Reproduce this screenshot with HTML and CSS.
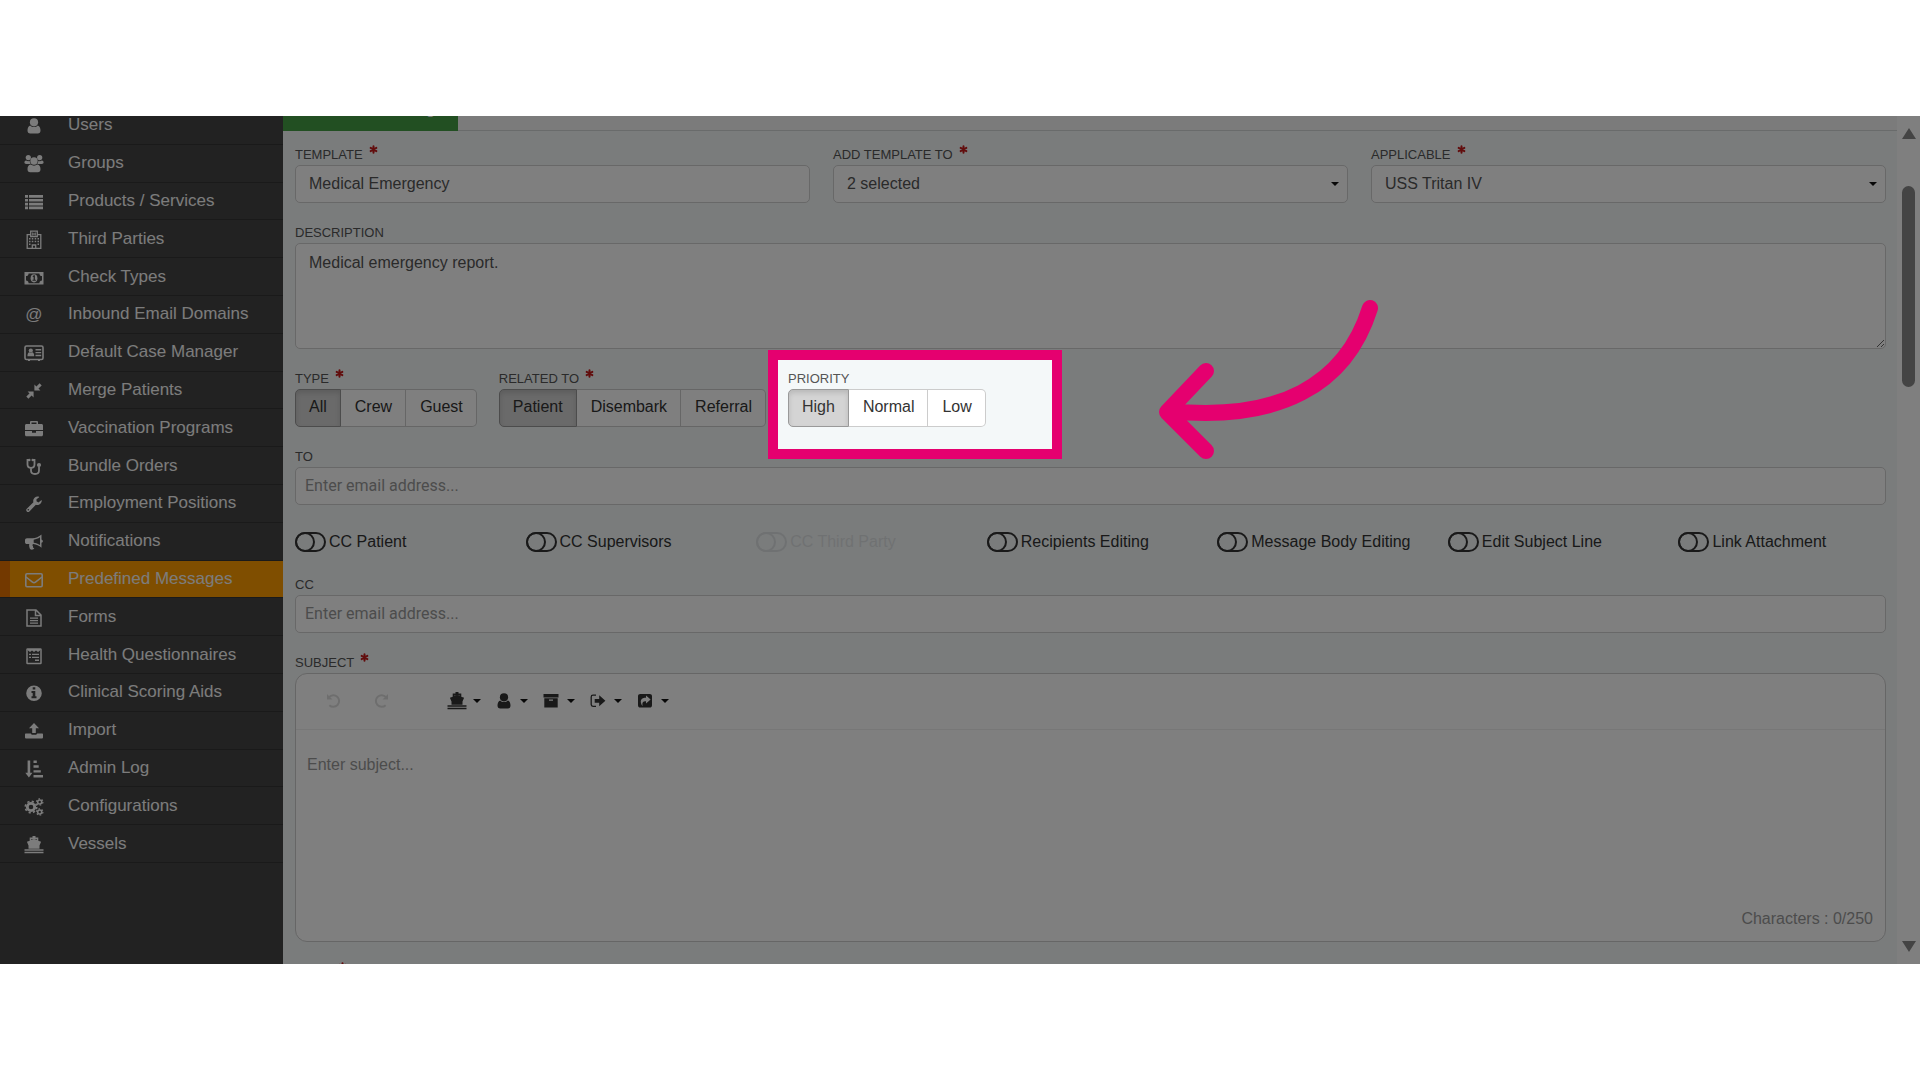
FILE: index.html
```html
<!DOCTYPE html>
<html lang="en">
<head>
<meta charset="utf-8">
<title>Predefined Messages</title>
<link rel="stylesheet" href="styles.css">
</head>
<body>
<svg class="sprite" aria-hidden="true">
  <symbol id="user" viewBox="0 0 20 20"><circle cx="10" cy="6.3" r="4.1"/><path d="M6.2 9.4c1 1 2.3 1.6 3.8 1.6s2.800-.6 3.800-1.600c2 .6 2.700 2.800 2.700 5.100 0 1.900-1 3-2.700 3H6.200c-1.700 0-2.700-1.100-2.700-3 0-2.300.7-4.500 2.700-5.100z"/></symbol>
  <symbol id="group" viewBox="0 0 20 20"><circle cx="4.300" cy="3.600" r="2.600"/><circle cx="15.700" cy="3.600" r="2.600"/><circle cx="10" cy="7" r="3.700"/><path d="M2.100 6.400c1.200.9 2.600.9 3.600.4 0 1.400.4 2.400 1 3.200H2.300C1 10 .4 9.300.4 8.300c0-.8.5-1.800 1.700-1.900zM17.900 6.400c-1.200.9-2.600.9-3.600.4 0 1.400-.4 2.400-1 3.200h4.400c1.300 0 1.900-.7 1.900-1.700 0-.8-.5-1.800-1.700-1.900zM6.700 10.600c1.900 1.500 4.700 1.500 6.600 0 2.500.3 3.200 2.500 3.200 4.700 0 1.800-1 2.900-2.700 2.900H6.200c-1.700 0-2.700-1.100-2.700-2.900 0-2.200.7-4.400 3.200-4.700z"/></symbol>
  <symbol id="list" viewBox="0 0 20 20"><path d="M1 3h3v2.700H1zM5 3h14v2.700H5zM1 6.900h3v2.700H1zM5 6.900h14v2.700H5zM1 10.700h3v2.700H1zM5 10.700h14v2.700H5zM1 14.500h3v2.700H1zM5 14.500h14v2.700H5z"/></symbol>
  <symbol id="hospital" viewBox="0 0 20 20"><path fill="none" stroke="currentColor" stroke-width="1.300" d="M6.500 4.700H3.200v13.600h13.600V4.700h-3.300M6.700 6.500V1.200h6.600v5.300zM8.300 18v-3h3.400v3"/><path d="M8.200 2.500h1v1h1.600v-1h1v3h-1v-1H9.200v1h-1zM5 8h1.500v1.500H5zM7.800 8h1.500v1.500H7.800zM10.700 8h1.500v1.500h-1.500zM13.500 8H15v1.500h-1.500zM5 10.700h1.500v1.500H5zM7.800 10.700h1.500v1.500H7.800zM10.700 10.700h1.500v1.500h-1.500zM13.500 10.700H15v1.500h-1.500zM5 13.400h1.500v1.500H5zM13.500 13.400H15v1.500h-1.500z"/></symbol>
  <symbol id="money" viewBox="0 0 20 20"><path fill-rule="evenodd" d="M.5 4h19v12.600H.5zM4.600 5.400C4.600 7 3.500 8 2 8v4.600c1.500 0 2.600 1 2.600 2.600h10.800c0-1.600 1.100-2.600 2.600-2.600V8c-1.500 0-2.600-1-2.600-2.600z"/><ellipse cx="10" cy="10.300" rx="3.400" ry="4.100"/><path class="cut" d="M8.600 8.300l1.200-1h1.100v4.500h1v1H8.500v-1h1.100V8.700l-.6.4z"/></symbol>
  <symbol id="contact" viewBox="0 0 20 20"><rect x="1" y="3" width="18" height="13.500" rx="1.500" fill="none" stroke="currentColor" stroke-width="1.600"/><circle cx="6.800" cy="7.500" r="2.100"/><path d="M3.400 13.300c0-2.700 1-4 2-4 .9.600 1.900.6 2.800 0 1 0 2 1.300 2 4zM11.500 6h5.700v1.400h-5.700zM11.500 8.900h5.700v1.400h-5.700zM11.500 11.800h5.700v1.400h-5.700zM4 16h2v2H4zM14 16h2v2h-2z"/></symbol>
  <symbol id="compress" viewBox="0 0 20 20"><path d="M9.600 10.400v6l-2-1.900-3.200 3.200-2.100-2.100 3.200-3.200-1.900-2zM10.400 9.600v-6l2 1.900 3.200-3.200 2.100 2.100-3.200 3.200 1.900 2z"/></symbol>
  <symbol id="briefcase" viewBox="0 0 20 20"><path fill-rule="evenodd" d="M6 5V3.200C6 2.500 6.500 2 7.200 2h5.600c.7 0 1.200.5 1.200 1.200V5h3.500c.9 0 1.500.6 1.500 1.500V11H1V6.500C1 5.600 1.600 5 2.500 5zm1.500 0h5V3.500h-5zM1 12h7v1.700h4V12h7v3.700c0 .9-.6 1.500-1.500 1.500h-15c-.9 0-1.500-.6-1.500-1.500z"/></symbol>
  <symbol id="stethoscope" viewBox="0 0 20 20"><path fill="none" stroke="currentColor" stroke-width="1.800" d="M5 3H3.500v4.500c0 2 1.400 3.300 3.500 3.300s3.500-1.300 3.500-3.300V3H9M7 10.800v2.700c0 2 1.500 3.500 4 3.500s4-1.500 4-3.500V9.500"/><circle cx="15" cy="8" r="2.100"/><circle cx="5.300" cy="3" r="1.200"/><circle cx="8.700" cy="3" r="1.200"/></symbol>
  <symbol id="wrench" viewBox="0 0 20 20"><path fill-rule="evenodd" d="M17.600 6c.4 1-.1 2.600-1.200 3.700-1.200 1.200-2.900 1.600-4.500 1.100l-6.500 6.600c-.8.8-1.900.8-2.600 0-.8-.7-.8-1.900 0-2.600l6.600-6.500c-.5-1.700 0-3.400 1.200-4.500 1.200-1.100 2.800-1.500 4.400-1l.2.500-2.700 2v2l1.900 1.100zM4.300 14.900a.8.800 0 100 1.600.8.800 0 000-1.600z"/></symbol>
  <symbol id="bullhorn" viewBox="0 0 20 20"><path fill-rule="evenodd" d="M17.500 2.500v5c1.900.4 1.900 2.900 0 3.300v5c-2.500-2-5-3.400-8.300-3.700-1 .6-.9 1.600-.1 2.200-.5.900.2 1.600 1.200 2.300-.9 1.400-3.300 1.300-4.300.5-.6-1.800-1.200-3.200-.7-5H3c-1.200 0-2-.8-2-1.900V8.100c0-1.100.8-1.900 2-1.900h5.500c3.300 0 6.300-1.600 9-3.700zM16 5.300c-2 1.300-4 2.100-6.300 2.400v3c2.300.3 4.300 1.100 6.300 2.400z"/></symbol>
  <symbol id="envelope" viewBox="0 0 20 20"><rect x="1.800" y="3.800" width="16.400" height="13" rx="1.200" fill="none" stroke="currentColor" stroke-width="1.600"/><path fill="none" stroke="currentColor" stroke-width="1.600" d="M2 7l6.500 5.200c1 .8 2 .8 3 0L18 7"/></symbol>
  <symbol id="file" viewBox="0 0 20 20"><path fill="none" stroke="currentColor" stroke-width="1.500" d="M3 2h9l5 5v11H3zM11.500 2v5.500H17"/><path d="M6 9.500h8v1.300H6zM6 12h8v1.300H6zM6 14.500h8v1.300H6z"/></symbol>
  <symbol id="form" viewBox="0 0 20 20"><rect x="3" y="3" width="14" height="14.500" rx=".6" fill="none" stroke="currentColor" stroke-width="1.500"/><path d="M4 4.500l2 1.500 2-1.500L10 6l2-1.500L14 6l2-1.500V3H4zM5 7.800h2V9H5zM8 7.800h7V9H8zM5 10.700h2v1.200H5zM8 10.700h7v1.200H8zM11 13.500h4V15h-4z"/></symbol>
  <symbol id="info" viewBox="0 0 20 20"><path fill-rule="evenodd" d="M10 2.400a7.800 7.800 0 100 15.600 7.800 7.800 0 000-15.600zM8.700 4.300h2.600v2.200H8.700zM7.500 8h3.800v5.300h1.200v1.900h-5v-1.900h1.200V9.900H7.500z"/></symbol>
  <symbol id="upload" viewBox="0 0 20 20"><path d="M10 2l5 5.200h-3.200V12H8.200V7.200H5zM1.700 12.500h5.100c.4 1 1 1.300 1.600 1.300h3.200c.6 0 1.200-.3 1.600-1.300h5.100c.4 0 .7.300.7.700v3.400c0 .5-.3.800-.7.800H1.700c-.4 0-.7-.3-.7-.8v-3.400c0-.4.3-.7.700-.7z"/></symbol>
  <symbol id="sort" viewBox="0 0 20 20"><path d="M3.600 1.500h2.600v12.300h2.300L4.900 18.600 1.300 13.800h2.300zM9.500 1.600h3.300v2.400H9.500zM9.500 6.300h5.200v2.400H9.500zM9.500 11.200h7.300v2.400H9.500zM9.500 16H19v2.400H9.500z"/></symbol>
  <symbol id="cogs" viewBox="0 0 20 20"><circle cx="7" cy="10" r="3.700" fill="none" stroke="currentColor" stroke-width="2.800"/><circle cx="7" cy="10" r="5.700" fill="none" stroke="currentColor" stroke-width="1.700" stroke-dasharray="2.200 2.280"/><circle cx="15.700" cy="5" r="2" fill="none" stroke="currentColor" stroke-width="1.600"/><circle cx="15.700" cy="5" r="3.200" fill="none" stroke="currentColor" stroke-width="1.200" stroke-dasharray="1.600 1.750"/><circle cx="15.700" cy="15" r="2" fill="none" stroke="currentColor" stroke-width="1.600"/><circle cx="15.700" cy="15" r="3.200" fill="none" stroke="currentColor" stroke-width="1.200" stroke-dasharray="1.600 1.750"/></symbol>
  <symbol id="ship" viewBox="0 0 20 20"><path d="M8.500 1h3v1.500h2.800v3.200l2.800 1-1.600 3.900v3.100h-11v-3.100L2.900 6.700l2.800-1V2.500h2.800zM.5 14.300h19v1.400H.5zM.5 16.700h19v1.600H.5z"/><path class="shade" d="M7 4h6v1.100l-3-1-3 1z"/></symbol>
  <symbol id="undo" viewBox="0 0 20 20"><path fill="none" stroke="currentColor" stroke-width="2" d="M5 6.200A5.800 5.800 0 1 1 5.300 14.200"/><path d="M3 3v5.500h5.500z"/></symbol>
  <symbol id="archive" viewBox="0 0 20 20"><path fill-rule="evenodd" d="M2.500 3h15v3.500h-15zM3.300 7.300h13.400v9.200H3.300zM8 8.500v1.200h4V8.500z"/></symbol>
  <symbol id="signout" viewBox="0 0 20 20"><path fill="none" stroke="currentColor" stroke-width="1.300" d="M8 4.200H5C4 4.200 3.200 5 3.200 6v7.600c0 1 .8 1.800 1.800 1.800h3"/><path d="M6.700 7.900h4.500V4.300l6.200 5.500-6.200 5.500v-3.600H6.700z"/></symbol>
  <symbol id="share" viewBox="0 0 20 20"><path fill-rule="evenodd" d="M5.300 3h9.400C16.100 3 17 3.900 17 5.300v8.900c0 1.400-.9 2.300-2.300 2.300H5.300C3.900 16.500 3 15.600 3 14.200V5.300C3 3.900 3.900 3 5.300 3zM11 4.600v2.200c-4.800 0-6.400 2.700-4.300 7.200l1 .9c-.9-3.300.3-4.700 3.300-4.700v2.200l4.600-3.900z"/></symbol>
  <symbol id="star" viewBox="0 0 10 10"><path fill="none" stroke="currentColor" stroke-width="2.200" stroke-linecap="round" d="M5 1.400v7.200M1.800 3.200l6.400 3.600M8.200 3.200L1.800 6.800"/></symbol>
</svg>

<div class="app">
  <nav class="sidebar" aria-label="Settings">
    <ul class="menu">
      <li><a href="#"><svg class="icon"><use href="#user"/></svg>Users</a></li>
      <li><a href="#"><svg class="icon"><use href="#group"/></svg>Groups</a></li>
      <li><a href="#"><svg class="icon"><use href="#list"/></svg>Products / Services</a></li>
      <li><a href="#"><svg class="icon"><use href="#hospital"/></svg>Third Parties</a></li>
      <li><a href="#"><svg class="icon"><use href="#money"/></svg>Check Types</a></li>
      <li><a href="#"><span class="icon at" aria-hidden="true">@</span>Inbound Email Domains</a></li>
      <li><a href="#"><svg class="icon"><use href="#contact"/></svg>Default Case Manager</a></li>
      <li><a href="#"><svg class="icon"><use href="#compress"/></svg>Merge Patients</a></li>
      <li><a href="#"><svg class="icon"><use href="#briefcase"/></svg>Vaccination Programs</a></li>
      <li><a href="#"><svg class="icon"><use href="#stethoscope"/></svg>Bundle Orders</a></li>
      <li><a href="#"><svg class="icon"><use href="#wrench"/></svg>Employment Positions</a></li>
      <li><a href="#"><svg class="icon"><use href="#bullhorn"/></svg>Notifications</a></li>
      <li><a href="#" class="active" aria-current="page"><svg class="icon"><use href="#envelope"/></svg>Predefined Messages</a></li>
      <li><a href="#"><svg class="icon"><use href="#file"/></svg>Forms</a></li>
      <li><a href="#"><svg class="icon"><use href="#form"/></svg>Health Questionnaires</a></li>
      <li><a href="#"><svg class="icon"><use href="#info"/></svg>Clinical Scoring Aids</a></li>
      <li><a href="#"><svg class="icon"><use href="#upload"/></svg>Import</a></li>
      <li><a href="#"><svg class="icon"><use href="#sort"/></svg>Admin Log</a></li>
      <li><a href="#"><svg class="icon"><use href="#cogs"/></svg>Configurations</a></li>
      <li><a href="#"><svg class="icon"><use href="#ship"/></svg>Vessels</a></li>
    </ul>
  </nav>

  <main class="main">
    <div class="tabs"><button type="button" class="tab">Predefined Message</button></div>
    <form class="form">
      <div class="columns">
        <div class="field">
          <label class="label" for="template">TEMPLATE <svg class="required"><use href="#star"/></svg></label>
          <input class="control" id="template" type="text" value="Medical Emergency">
        </div>
        <div class="field">
          <label class="label" for="addto">ADD TEMPLATE TO <svg class="required"><use href="#star"/></svg></label>
          <div class="select"><select class="control" id="addto"><option>2 selected</option></select></div>
        </div>
        <div class="field">
          <label class="label" for="applicable">APPLICABLE <svg class="required"><use href="#star"/></svg></label>
          <div class="select"><select class="control" id="applicable"><option>USS Tritan IV</option></select></div>
        </div>
      </div>

      <div class="field">
        <label class="label" for="description">DESCRIPTION</label>
        <textarea class="control description" id="description">Medical emergency report.</textarea>
      </div>

      <div class="choices">
        <div class="field" role="group" aria-labelledby="type">
          <span class="label" id="type">TYPE <svg class="required"><use href="#star"/></svg></span>
          <div class="segments">
            <button type="button" class="segment" aria-pressed="true">All</button>
            <button type="button" class="segment">Crew</button>
            <button type="button" class="segment">Guest</button>
          </div>
        </div>
        <div class="field" role="group" aria-labelledby="related">
          <span class="label" id="related">RELATED TO <svg class="required"><use href="#star"/></svg></span>
          <div class="segments">
            <button type="button" class="segment" aria-pressed="true">Patient</button>
            <button type="button" class="segment">Disembark</button>
            <button type="button" class="segment">Referral</button>
          </div>
        </div>
        <div class="field priority" role="group" aria-labelledby="priority">
          <span class="label" id="priority">PRIORITY</span>
          <div class="segments">
            <button type="button" class="segment" aria-pressed="true">High</button>
            <button type="button" class="segment">Normal</button>
            <button type="button" class="segment">Low</button>
          </div>
          <div class="spotlight"></div>
          <svg class="pointer" viewBox="0 0 224 164" aria-hidden="true"><path d="M213 9C189 86 122 123 12 112M49 72L10 113L49 152"/></svg>
        </div>
      </div>

      <div class="field">
        <label class="label" for="to">TO</label>
        <input class="control email" id="to" type="text" placeholder="Enter email address...">
      </div>

      <div class="toggles">
        <label class="toggle"><input type="checkbox">CC Patient</label>
        <label class="toggle"><input type="checkbox">CC Supervisors</label>
        <label class="toggle off"><input type="checkbox" disabled>CC Third Party</label>
        <label class="toggle"><input type="checkbox">Recipients Editing</label>
        <label class="toggle"><input type="checkbox">Message Body Editing</label>
        <label class="toggle"><input type="checkbox">Edit Subject Line</label>
        <label class="toggle"><input type="checkbox">Link Attachment</label>
      </div>

      <div class="field">
        <label class="label" for="cc">CC</label>
        <input class="control email" id="cc" type="text" placeholder="Enter email address...">
      </div>

      <div class="field">
        <label class="label" for="subject">SUBJECT <svg class="required"><use href="#star"/></svg></label>
        <div class="editor">
          <div class="toolbar">
            <button type="button" class="tool" aria-label="Undo" disabled><svg class="icon"><use href="#undo"/></svg></button>
            <button type="button" class="tool redo" aria-label="Redo" disabled><svg class="icon"><use href="#undo"/></svg></button>
            <span class="divider"></span>
            <button type="button" class="tool menu-tool" aria-label="Vessel"><svg class="icon"><use href="#ship"/></svg></button>
            <button type="button" class="tool menu-tool" aria-label="Person"><svg class="icon"><use href="#user"/></svg></button>
            <button type="button" class="tool menu-tool" aria-label="Case"><svg class="icon"><use href="#archive"/></svg></button>
            <button type="button" class="tool menu-tool" aria-label="Disembark"><svg class="icon"><use href="#signout"/></svg></button>
            <button type="button" class="tool menu-tool" aria-label="Referral"><svg class="icon"><use href="#share"/></svg></button>
          </div>
          <textarea class="subject" id="subject" placeholder="Enter subject..."></textarea>
          <div class="counter">Characters : 0/250</div>
        </div>
      </div>

      <div class="field">
        <span class="label">BODY <svg class="required"><use href="#star"/></svg></span>
      </div>
    </form>
  </main>

  <div class="scrollbar" aria-hidden="true">
    <span class="arrow up"></span>
    <span class="thumb"></span>
    <span class="arrow down"></span>
  </div>
</div>
</body>
</html>
```
FILE: styles.css
```css
*, *::before, *::after { box-sizing: border-box; }

body {
  margin: 0;
  padding: 116px 0;
  background: #fff;
  font: 16px/22px "Liberation Sans", Arial, sans-serif;
  color: #333;
}

button, input, select, textarea { font: inherit; color: inherit; margin: 0; }

.sprite { position: absolute; width: 0; height: 0; }

.app {
  position: relative;
  display: flex;
  height: calc(100vh - 232px);
  overflow: hidden;
}

/* Sidebar */
.sidebar { flex: 0 0 283px; background: #444; }
.menu {
  display: grid;
  grid-auto-rows: 1fr;
  height: 756px;
  margin: -9px 0 0;
  padding: 0;
  list-style: none;
}
.menu li { display: flex; border-bottom: 1px solid #343434; }
.menu a {
  flex: 1;
  display: flex;
  align-items: center;
  gap: 24px;
  padding-left: 24px;
  font-size: 17px;
  color: #f8f8f8;
  text-decoration: none;
}
.menu .active { background: #ff9d00; border-left: 10px solid #e67300; padding-left: 14px; }
.icon { width: 20px; height: 20px; fill: currentColor; flex: none; }
.menu .icon { margin-top: 2px; }
.at { font-size: 17px; line-height: 20px; text-align: center; }
.cut { fill: #444; }
.shade { fill: #777; }

/* Main column */
.main { flex: 1; min-width: 0; background: #f4f8f9; }
.tabs { height: 15px; display: flex; align-items: flex-end; background: #f6f6f6; border-bottom: 1px solid #d2d6d6; }
.tab {
  height: 38px;
  width: 175px;
  margin-bottom: -1px;
  padding: 0 0 6px;
  border: 0;
  background: #449f44;
  color: #fff;
  flex: none;
  white-space: nowrap;
}
.form { display: flex; flex-direction: column; gap: 20px; padding: 14px 11px 0 12px; }
.columns { display: grid; grid-template-columns: repeat(3, 1fr); gap: 23px; }
.field { display: flex; flex-direction: column; }
.label { display: flex; gap: 6px; height: 20px; font-size: 13px; line-height: 19px; color: #555; }
.required { width: 9px; height: 9px; color: #c41a1a; }

.control {
  width: 100%;
  height: 38px;
  padding: 0 13px;
  border: 1px solid #d0d0d0;
  border-radius: 5px;
  background: #fff;
  color: #555;
}
.email { padding: 0 9px 2px; font-family: Roboto, sans-serif; }
::placeholder { color: #999; opacity: 1; }
.description { height: 106px; padding: 8px 13px; resize: vertical; display: block; }

.select { display: grid; }
.select > *, .select::after { grid-area: 1 / 1; }
.select select { appearance: none; }
.select::after, .menu-tool::after {
  content: "";
  border: 4px solid transparent;
  border-top-color: #111;
  border-bottom: 0;
}
.select::after { place-self: center end; margin-right: 9px; }

.choices { display: flex; gap: 22px; }
.segments { display: flex; }
.segment {
  height: 38px;
  padding: 0 13px 2px;
  border: 1px solid #ccc;
  background: #fff;
}
.segment + .segment { border-left: 0; padding-left: 14px; }
.segment:first-child { border-radius: 5px 0 0 5px; }
.segment:last-child { border-radius: 0 5px 5px 0; }
.segment[aria-pressed="true"] {
  background: #d4d4d4;
  border-color: #999;
  box-shadow: inset 0 3px 5px rgba(0, 0, 0, .125);
}

/* Tutorial highlight: the shadow dims everything outside the frame */
.priority { position: relative; }
.spotlight {
  position: absolute;
  z-index: 2;
  top: -19px;
  left: -20px;
  width: 294px;
  height: 109px;
  border: 10px solid #e5006f;
  box-shadow: 0 0 0 2000px rgba(0, 0, 0, .5);
  pointer-events: none;
}
.pointer {
  position: absolute;
  z-index: 3;
  top: -70px;
  left: 369px;
  width: 224px;
  height: 164px;
  fill: none;
  stroke: #e5006f;
  stroke-width: 16;
  stroke-linecap: round;
  stroke-linejoin: round;
  pointer-events: none;
}

.toggles { display: grid; grid-template-columns: repeat(7, 1fr); gap: 23px; padding: 7px 0 3px; }
.toggle { display: flex; align-items: center; gap: 3px; height: 20px; white-space: nowrap; }
.toggle input {
  appearance: none;
  display: flex;
  flex: none;
  width: 31px;
  height: 20px;
  border: 2px solid #333;
  border-radius: 10px;
}
.toggle input::before {
  content: "";
  flex: none;
  width: 20px;
  height: 20px;
  margin: -2px;
  border: 2px solid #333;
  border-radius: 50%;
}
.toggle.off { opacity: .1; }

/* Subject editor */
.editor {
  display: flex;
  flex-direction: column;
  height: 269px;
  border: 1px solid #ccc;
  border-radius: 12px;
  background: #fff;
  overflow: hidden;
}
.toolbar { display: flex; align-items: center; height: 56px; padding: 0 14px 2px; border-bottom: 1px solid #eee; }
.tool {
  display: flex;
  align-items: center;
  justify-content: center;
  gap: 6px;
  width: 47px;
  height: 36px;
  padding: 0;
  border: 0;
  background: none;
}
.tool:disabled { color: #ddd; }
.redo .icon { transform: scaleX(-1); }
.divider { width: 36px; }
.subject { flex: 1; padding: 24px 11px; border: 0; resize: none; background: none; }
.counter { padding: 0 12px 11px; text-align: right; color: #999; }

/* Scrollbar */
.scrollbar { flex: 0 0 23px; display: flex; flex-direction: column; align-items: center; padding: 12px 0; background: #fff; }
.arrow { border: 7px solid transparent; }
.up { border-top: 0; border-bottom: 11px solid #888; }
.down { border-bottom: 0; border-top: 11px solid #888; margin-top: auto; }
.thumb { width: 13px; height: 201px; margin-top: 47px; border-radius: 7px; background: #888; }
```
